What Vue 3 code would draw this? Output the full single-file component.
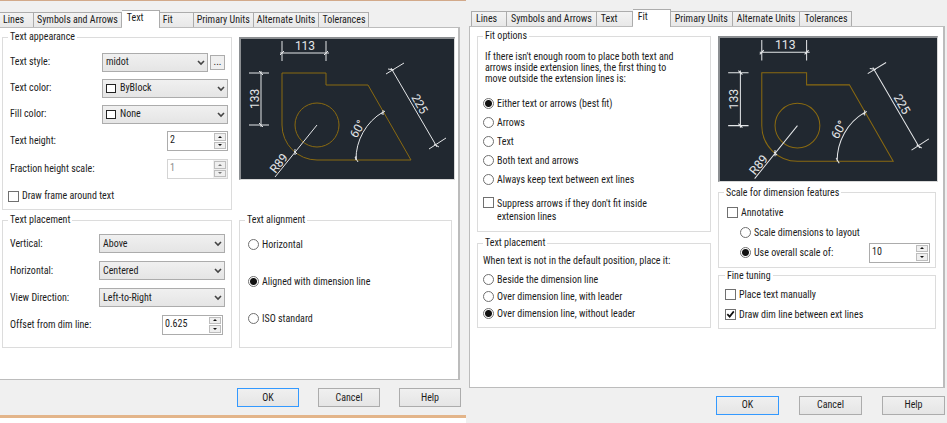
<template>
  <div class="workspace">
    <section
      v-for="dialog in dialogs"
      :key="dialog.id"
      class="dialog"
      :class="`dialog--${dialog.id}`"
    >
      <div class="tabs" role="tablist">
        <button
          v-for="tab in tabs"
          :key="tab"
          type="button"
          role="tab"
          class="tab"
          :class="{ 'tab--active': tab === dialog.tab }"
          :aria-selected="tab === dialog.tab"
        >
          {{ tab }}
        </button>
      </div>

      <div class="panel">
        <div v-if="dialog.id === 'text'" class="column">
          <fieldset class="group">
            <legend>Text appearance</legend>
            <div class="row">
              <label for="text-style">Text style:</label>
              <div class="style-picker">
                <div class="select">
                  <select id="text-style" v-model="form.textStyle">
                    <option>midot</option>
                    <option>Standard</option>
                  </select>
                  <svg class="chevron" viewBox="0 0 8 6"><path d="M1 1l3 3 3-3" /></svg>
                </div>
                <button type="button" class="more">...</button>
              </div>
            </div>
            <div v-for="item in colors" :key="item.key" class="row">
              <label :for="item.key">{{ item.label }}</label>
              <div class="select select--swatch">
                <span class="swatch" />
                <select :id="item.key" v-model="form[item.key]">
                  <option>None</option>
                  <option>ByLayer</option>
                  <option>ByBlock</option>
                </select>
                <svg class="chevron" viewBox="0 0 8 6"><path d="M1 1l3 3 3-3" /></svg>
              </div>
            </div>
            <div class="row row--tall">
              <label for="text-height">Text height:</label>
              <div class="spin">
                <input id="text-height" v-model="form.textHeight" type="text">
                <div class="spin-buttons">
                  <button type="button" aria-label="Increase" @click="step('textHeight', 1)"><i class="up" /></button>
                  <button type="button" aria-label="Decrease" @click="step('textHeight', -1)"><i class="down" /></button>
                </div>
              </div>
            </div>
            <div class="row row--tall">
              <label for="fraction-scale">Fraction height scale:</label>
              <div class="spin spin--disabled">
                <input id="fraction-scale" v-model="form.fractionScale" type="text" disabled>
                <div class="spin-buttons">
                  <button type="button" aria-label="Increase" disabled><i class="up" /></button>
                  <button type="button" aria-label="Decrease" disabled><i class="down" /></button>
                </div>
              </div>
            </div>
            <label class="choice choice--frame">
              <input v-model="form.drawFrame" type="checkbox">
              Draw frame around text
            </label>
          </fieldset>

          <fieldset class="group group--placement">
            <legend>Text placement</legend>
            <div v-for="item in placements" :key="item.key" class="row">
              <label :for="item.key">{{ item.label }}</label>
              <div class="select">
                <select :id="item.key" v-model="form[item.key]">
                  <option v-for="option in item.options" :key="option">{{ option }}</option>
                </select>
                <svg class="chevron" viewBox="0 0 8 6"><path d="M1 1l3 3 3-3" /></svg>
              </div>
            </div>
            <div class="row">
              <label for="dim-offset">Offset from dim line:</label>
              <div class="spin">
                <input id="dim-offset" v-model="form.dimOffset" type="text">
                <div class="spin-buttons">
                  <button type="button" aria-label="Increase" @click="step('dimOffset', 1)"><i class="up" /></button>
                  <button type="button" aria-label="Decrease" @click="step('dimOffset', -1)"><i class="down" /></button>
                </div>
              </div>
            </div>
          </fieldset>
        </div>

        <div v-else class="column">
          <fieldset class="group group--fit">
            <legend>Fit options</legend>
            <p class="intro">
              If there isn't enough room to place both text and<br>
              arrows inside extension lines, the first thing to<br>
              move outside the extension lines is:
            </p>
            <label v-for="option in fitOptions" :key="option" class="choice">
              <input v-model="form.fit" type="radio" name="fit" :value="option">
              {{ option }}
            </label>
            <label class="choice choice--suppress">
              <input v-model="form.suppress" type="checkbox">
              <span>Suppress arrows if they don't fit inside<br>extension lines</span>
            </label>
          </fieldset>

          <fieldset class="group group--position">
            <legend>Text placement</legend>
            <p class="hint">When text is not in the default position, place it:</p>
            <label v-for="option in positions" :key="option" class="choice">
              <input v-model="form.position" type="radio" name="position" :value="option">
              {{ option }}
            </label>
          </fieldset>
        </div>

        <div class="column">
          <div class="preview">
            <svg viewBox="0 0 213 140" role="img" aria-label="Dimension preview">
              <g class="part">
                <path d="M41 34H85V46H127L170 121H76A35 35 0 0 1 41 86Z" />
                <circle cx="76" cy="86" r="22" />
              </g>
              <g class="dims">
                <path d="M41 2V22M85 2V22M39 14H88M39 16L43 12M83 16L87 12" />
                <path d="M8 34H28M8 86H28M20 32V88M18 32L22 36M18 84L22 88" />
                <path d="M150 29L196 108M145 35L163 24M188 110L205 99M147 30L153 31M193 105L198 108" />
                <path d="M142 73A55 55 0 0 0 115 121M142 71V76M140 75L144 72M114 118L117 123M115 117V121" />
                <path d="M76 86L34 138M54 110V116M53 112L56 115" />
              </g>
              <g class="numbers">
                <text x="64" y="11">113</text>
                <text transform="translate(18 60) rotate(-90)">133</text>
                <text transform="translate(175 67) rotate(60)">225</text>
                <text transform="translate(120 92) rotate(-60)">60°</text>
                <text transform="translate(41 127) rotate(-51)">R89</text>
              </g>
            </svg>
          </div>

          <fieldset v-if="dialog.id === 'text'" class="group group--align">
            <legend>Text alignment</legend>
            <label v-for="option in alignments" :key="option" class="choice">
              <input v-model="form.alignment" type="radio" name="alignment" :value="option">
              {{ option }}
            </label>
          </fieldset>

          <template v-else>
            <fieldset class="group group--scale">
              <legend>Scale for dimension features</legend>
              <label class="choice">
                <input v-model="form.annotative" type="checkbox">
                Annotative
              </label>
              <label class="choice choice--nested">
                <input v-model="form.scaleMode" type="radio" name="scale" value="layout">
                Scale dimensions to layout
              </label>
              <div class="scale-row">
                <label class="choice choice--nested">
                  <input v-model="form.scaleMode" type="radio" name="scale" value="overall">
                  Use overall scale of:
                </label>
                <div class="spin">
                  <input v-model="form.overallScale" type="text" aria-label="Overall scale">
                  <div class="spin-buttons">
                    <button type="button" aria-label="Increase" @click="step('overallScale', 1)"><i class="up" /></button>
                    <button type="button" aria-label="Decrease" @click="step('overallScale', -1)"><i class="down" /></button>
                  </div>
                </div>
              </div>
            </fieldset>

            <fieldset class="group group--tuning">
              <legend>Fine tuning</legend>
              <label class="choice">
                <input v-model="form.placeManually" type="checkbox">
                Place text manually
              </label>
              <label class="choice">
                <input v-model="form.drawDimLine" type="checkbox">
                Draw dim line between ext lines
              </label>
            </fieldset>
          </template>
        </div>
      </div>

      <footer class="actions">
        <button type="button" class="action action--default">OK</button>
        <button type="button" class="action">Cancel</button>
        <button type="button" class="action">Help</button>
      </footer>
    </section>
  </div>
</template>

<script setup>
import { reactive } from 'vue'

const tabs = ['Lines', 'Symbols and Arrows', 'Text', 'Fit', 'Primary Units', 'Alternate Units', 'Tolerances']

const dialogs = [
  { id: 'text', tab: 'Text' },
  { id: 'fit', tab: 'Fit' },
]

const colors = [
  { key: 'textColor', label: 'Text color:' },
  { key: 'fillColor', label: 'Fill color:' },
]

const placements = [
  { key: 'vertical', label: 'Vertical:', options: ['Centered', 'Above', 'Outside', 'Below'] },
  { key: 'horizontal', label: 'Horizontal:', options: ['Centered', 'At Ext Line 1', 'At Ext Line 2'] },
  { key: 'direction', label: 'View Direction:', options: ['Left-to-Right', 'Right-to-Left'] },
]

const alignments = ['Horizontal', 'Aligned with dimension line', 'ISO standard']

const fitOptions = [
  'Either text or arrows (best fit)',
  'Arrows',
  'Text',
  'Both text and arrows',
  'Always keep text between ext lines',
]

const positions = [
  'Beside the dimension line',
  'Over dimension line, with leader',
  'Over dimension line, without leader',
]

const form = reactive({
  textStyle: 'midot',
  textColor: 'ByBlock',
  fillColor: 'None',
  textHeight: '2',
  fractionScale: '1',
  drawFrame: false,
  vertical: 'Above',
  horizontal: 'Centered',
  direction: 'Left-to-Right',
  dimOffset: '0.625',
  alignment: 'Aligned with dimension line',
  fit: 'Either text or arrows (best fit)',
  suppress: false,
  position: 'Over dimension line, without leader',
  annotative: false,
  scaleMode: 'overall',
  overallScale: '10',
  placeManually: false,
  drawDimLine: true,
})

function step(key, amount) {
  form[key] = String(Math.max(0, Number(form[key]) + amount))
}
</script>

<style>
body {
  background: #fff;
}
</style>

<style scoped>
* {
  box-sizing: border-box;
}

.workspace {
  display: grid;
  grid-template-columns: 466fr 481fr;
  align-items: start;
  min-height: 100vh;
  font-family: "Roboto Condensed", "Liberation Sans Narrow", Lato, sans-serif;
  font-size: 10px;
  line-height: 12px;
  color: #1c1c1c;
}

button,
input,
select {
  margin: 0;
  font: inherit;
  color: inherit;
}

.dialog {
  min-width: 0;
  background: #f0f0f0;
}

.dialog--text {
  border-top: 1px solid #d2a98a;
  border-bottom: 3px solid #e3b58a;
}

.dialog--fit {
  min-height: 100vh;
  padding-left: 3px;
}

.tabs {
  display: flex;
  align-items: flex-end;
  padding-top: 9px;
}

.dialog--fit .tabs {
  padding-left: 2px;
}

.tab {
  min-width: 34px;
  height: 15px;
  padding: 0 3px;
  border: 1px solid #acacac;
  border-bottom: 0;
  border-left-width: 0;
  background: linear-gradient(#f3f3f3, #e8e8e8);
  line-height: 14px;
  text-align: left;
  white-space: nowrap;
}

.dialog--fit .tab {
  min-width: 36px;
  padding: 0 4px;
}

.dialog--fit .tab:first-child {
  border-left-width: 1px;
}

.dialog .tab--active {
  position: relative;
  min-width: 38px;
  height: 18px;
  margin-bottom: -1px;
  padding: 0 5px 3px;
  background: #fff;
}

.panel {
  display: grid;
  gap: 7px;
  border: 1px solid #bcbcbc;
  border-right: 2px solid #bcbcbc;
  background: #fff;
}

.dialog--text .panel {
  grid-template-columns: 230fr 216fr;
  margin-right: 6px;
  padding: 3px 3px 31px 2px;
  border-left: 0;
}

.dialog--fit .panel {
  grid-template-columns: 235fr 221fr;
  margin-right: 2px;
  padding: 3px 5px 58px 7px;
}

.column {
  display: flex;
  flex-direction: column;
  min-width: 0;
}

.group {
  min-width: 0;
  margin: 0;
  padding: 6px 3px 0 5px;
  border: 1px solid #dcdcdc;
}

.group legend {
  padding: 0 2px;
}

.row {
  display: flex;
  align-items: center;
  justify-content: space-between;
  height: 26px;
  padding-left: 2px;
}

.row--tall {
  height: 28px;
}

.style-picker {
  display: flex;
  align-items: center;
  gap: 2px;
  padding-right: 3px;
}

.style-picker .select {
  width: 106px;
}

.more {
  width: 15px;
  height: 15px;
  padding: 0;
  border: 1px solid #acacac;
  background: #efefef;
  line-height: 10px;
}

.select {
  position: relative;
  width: 126px;
}

.select select {
  display: block;
  width: 100%;
  height: 19px;
  padding: 0 16px 0 3px;
  border: 1px solid #acacac;
  border-radius: 0;
  background: linear-gradient(#f0f0f0, #e5e5e5);
  appearance: none;
}

.select--swatch select {
  padding-left: 17px;
}

.swatch {
  position: absolute;
  top: 5px;
  left: 4px;
  width: 10px;
  height: 9px;
  border: 1px solid #222;
  background: #fff;
}

.chevron {
  position: absolute;
  top: 7px;
  right: 3px;
  width: 8px;
  height: 6px;
  fill: none;
  stroke: #444;
  stroke-width: 1.6;
  pointer-events: none;
}

.spin {
  display: flex;
  width: 61px;
  height: 20px;
  border: 1px solid #acacac;
  background: #fff;
}

.spin input {
  flex: 1;
  min-width: 0;
  padding: 0 2px 2px;
  border: 0;
  background: transparent;
}

.spin-buttons {
  display: flex;
  flex-direction: column;
  gap: 1px;
  width: 14px;
  padding: 1px;
}

.spin-buttons button {
  display: grid;
  flex: 1;
  place-items: center;
  padding: 0;
  border: 1px solid #bdbdbd;
  background: #efefef;
}

.up,
.down {
  border: 2px solid transparent;
}

.up {
  border-top: 0;
  border-bottom-color: #111;
}

.down {
  border-top-color: #111;
  border-bottom: 0;
}

.spin--disabled {
  border-color: #d4d4d4;
  color: #8a8a8a;
}

.spin--disabled .spin-buttons {
  background: #f0f0f0;
}

.spin--disabled .up {
  border-bottom-color: #777;
}

.spin--disabled .down {
  border-top-color: #777;
}

.choice {
  display: flex;
  align-items: center;
  gap: 3px;
  height: 20px;
  white-space: nowrap;
}

.choice input {
  flex: none;
  width: 11px;
  height: 11px;
  border: 1px solid #707070;
  background: #fff;
  appearance: none;
}

.choice input[type="radio"] {
  border-radius: 50%;
}

.choice input[type="radio"]:checked {
  background: radial-gradient(circle, #111 0 3px, #fff 4px);
}

.choice input[type="checkbox"]:checked::before {
  content: "";
  display: block;
  width: 9px;
  height: 9px;
  background: #111;
  clip-path: polygon(8% 50%, 22% 38%, 40% 58%, 80% 8%, 94% 20%, 42% 88%);
}

.choice--frame {
  height: 26px;
}

.group--placement {
  margin-top: 4px;
  padding: 4px 6px 9px 5px;
}

.group--placement .row {
  height: 27px;
}

.group--placement .spin {
  margin-right: 2px;
}

.group--align {
  margin-top: auto;
  margin-right: 3px;
  padding: 0 8px 10px;
}

.group--align legend,
.group--scale legend {
  margin-left: -3px;
}

.group--align .choice {
  height: 37px;
}

.intro,
.hint {
  margin: 0;
  white-space: nowrap;
}

.group--fit {
  padding-bottom: 8px;
}

.intro {
  padding: 3px 0 10px 2px;
  line-height: 11px;
}

.group--fit .choice {
  height: 19px;
}

.group--fit .choice--suppress {
  align-items: flex-start;
  height: auto;
  padding-top: 8px;
  line-height: 13px;
}

.group--position {
  margin-top: 5px;
  padding: 6px 5px 5px;
}

.hint {
  padding-bottom: 4px;
}

.group--position .choice {
  height: 17px;
}

.preview {
  margin-top: 6px;
  border: 2px solid #8c8f92;
  border-right: 1px solid #d8d8d8;
  border-bottom: 1px solid #d8d8d8;
  background: #212830;
}

.preview svg {
  display: block;
  width: 100%;
  height: auto;
}

.part,
.dims {
  fill: none;
  stroke-width: 1;
}

.part {
  stroke: #8a6a10;
}

.dims {
  stroke: #e4e6e8;
}

.numbers {
  fill: #e4e6e8;
  font-family: Roboto, "Open Sans", sans-serif;
  font-size: 12px;
  text-anchor: middle;
}

.group--scale {
  margin-top: 5px;
  margin-right: 2px;
  padding: 4px 5px 4px 8px;
}

.choice--nested {
  padding-left: 13px;
}

.scale-row {
  display: flex;
  align-items: center;
  justify-content: space-between;
}

.group--tuning {
  margin-top: 2px;
  margin-right: 2px;
  padding: 3px 6px;
}

.actions {
  display: flex;
  justify-content: flex-end;
  gap: 19px;
  padding: 8px 5px 8px;
}

.dialog--fit .actions {
  gap: 20px;
  padding-right: 2px;
}

.action {
  width: 62px;
  height: 19px;
  padding: 0;
  border: 1px solid #acacac;
  background: linear-gradient(#f0f0f0, #e5e5e5);
}

.dialog--fit .action {
  width: 63px;
}

.action--default {
  border-color: #3399ff;
}
</style>
